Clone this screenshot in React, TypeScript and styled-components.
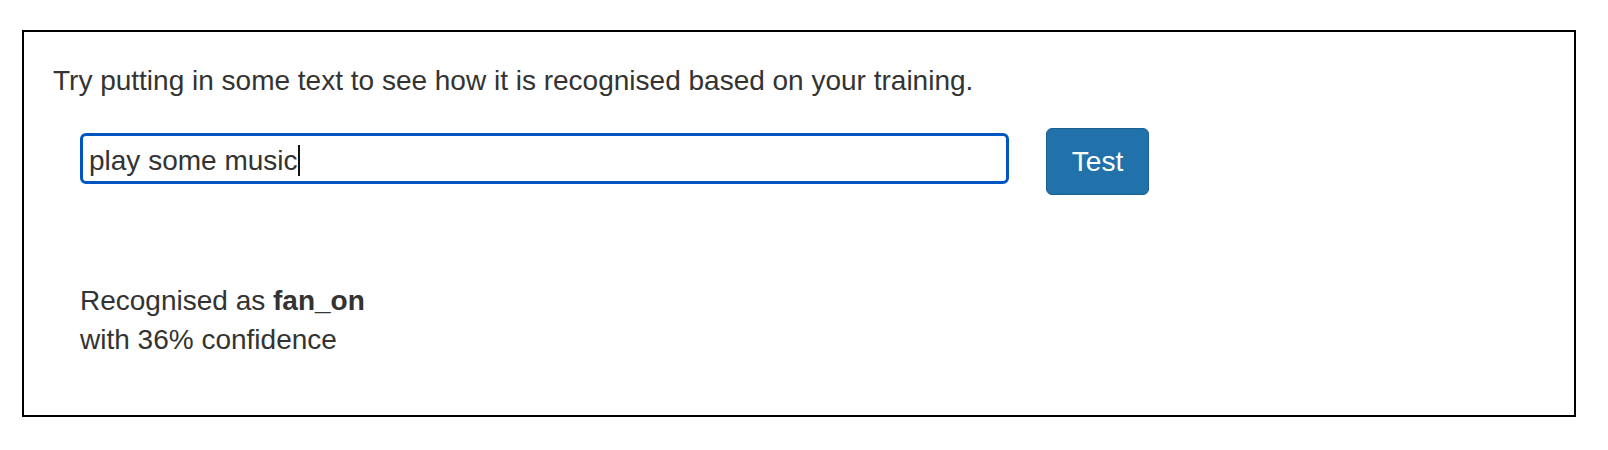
import React from "react";
import styled, { createGlobalStyle } from "styled-components";

const Global = createGlobalStyle`
  html, body {
    margin: 0;
    padding: 0;
    background: #ffffff;
  }
  body {
    font-family: "Liberation Sans", Arial, Helvetica, sans-serif;
    color: #333333;
  }
`;

const Page = styled.div`
  padding: 30px 32px 0 22px;
`;

const Panel = styled.section`
  width: 1554px;
  height: 387px;
  box-sizing: border-box;
  border: 2px solid #000000;
  padding: 29px 28px 0 29px;
  display: flex;
  flex-direction: column;
`;

const Intro = styled.p`
  margin: 0;
  font-size: 28px;
  line-height: 40px;
`;

const TestRow = styled.div`
  display: flex;
  align-items: flex-start;
  gap: 37px;
  margin-top: 27px;
  padding-left: 27px;
`;

const Field = styled.div`
  width: 929px;
  height: 51px;
  box-sizing: border-box;
  margin-top: 5px;
  border: 3px solid #0055c5;
  border-radius: 6px;
  padding: 4px 6px 0;
  display: flex;
  align-items: center;
  font-size: 28px;
  color: #333333;
  background: #ffffff;
`;

const Caret = styled.span`
  display: inline-block;
  width: 2px;
  height: 31px;
  background: #111111;
`;

const TestButton = styled.button`
  width: 103px;
  height: 67px;
  box-sizing: border-box;
  border: 1px solid #1b5e90;
  border-radius: 6px;
  background: #2171aa;
  color: #ffffff;
  font-family: "Liberation Sans", Arial, Helvetica, sans-serif;
  font-size: 28px;
  padding: 0;
  cursor: pointer;
`;

const Result = styled.div`
  margin-top: 86px;
  padding-left: 27px;
  font-size: 28px;
  line-height: 39px;
`;

const Line = styled.div``;

export default function App() {
  const label = "fan_on";
  const confidence = 36;
  return (
    <>
      <Global />
      <Page>
        <Panel>
          <Intro>
            Try putting in some text to see how it is recognised based on your training.
          </Intro>
          <TestRow>
            <Field role="textbox" aria-label="Test text">
              <span>play some music</span>
              <Caret />
            </Field>
            <TestButton type="button">Test</TestButton>
          </TestRow>
          <Result>
            <Line>
              Recognised as <strong>{label}</strong>
            </Line>
            <Line>with {confidence}% confidence</Line>
          </Result>
        </Panel>
      </Page>
    </>
  );
}
